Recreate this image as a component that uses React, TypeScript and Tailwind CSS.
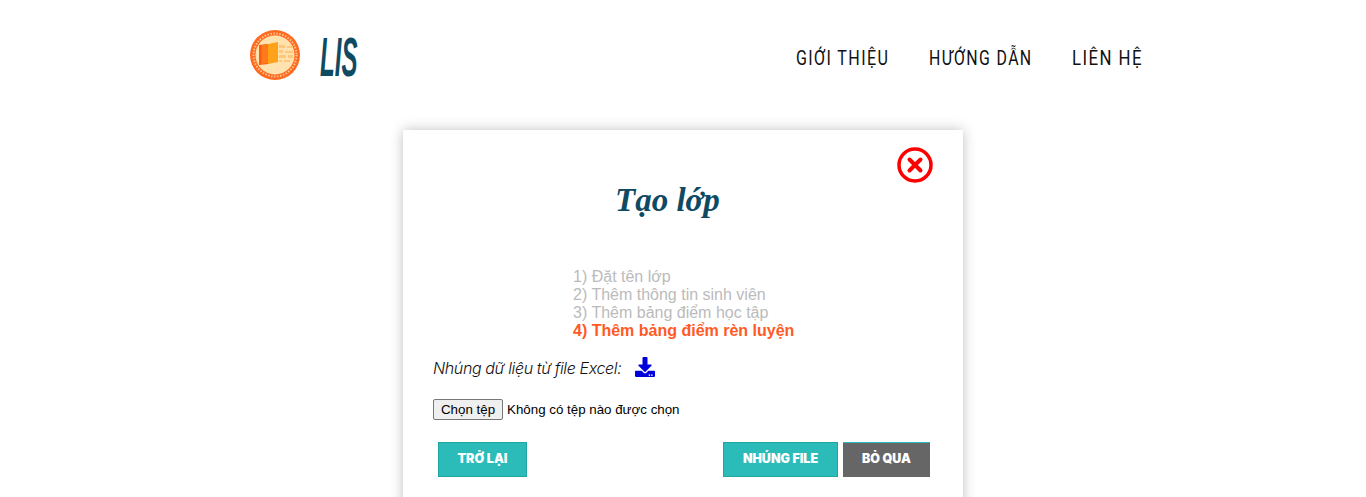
import { FaDownload } from "react-icons/fa";

const Logo = () => (
  <svg width="50" height="50" viewBox="0 0 50 50">
    <circle cx="25" cy="25" r="25" fill="#ff6a1f" />
    <circle cx="25" cy="25" r="21.5" fill="none" stroke="#ffc48f" strokeWidth="2" strokeDasharray="1.5 1.5" />
    <circle cx="25" cy="25" r="19.5" fill="#ffe2ae" />
    <path d="M9 15 L18 14 V34 L9 35 Z" fill="#ff5a12" />
    <path d="M11.5 15 L18 14 V33 L11.5 34 Z" fill="#ff7a1a" />
    <path d="M18 14 L28 12 V32 L18 34 Z" fill="#ffa21a" />
    <path d="M29 15 h6 v3 h-6 Z M37 16 h6 v2 h-6 Z M29 20 h4 v3 h-4 Z M35 21 h8 v2 h-8 Z M29 25 h7 v3 h-7 Z M38 25 h5 v3 h-5 Z M29 30 h3 v2 h-3 Z M34 30 h6 v2 h-6 Z" fill="#ffc77a" />
  </svg>
);

const TealButton = ({ children, className }: { children: string; className: string }) => (
  <button className={`h-[35px] border border-[#21a5a3] bg-[#2bbbb9] text-center font-['Inter',sans-serif] text-[12.5px] font-black text-white ${className}`}>
    {children}
  </button>
);

const NavLink = ({ children, className }: { children: string; className: string }) => (
  <a className={`block origin-left whitespace-nowrap ${className}`}>{children}</a>
);

export default function App() {
  return (
    <div className="h-[497px] overflow-hidden bg-white font-['Liberation_Sans',sans-serif]">
      <header className="ml-[250px] flex h-[100px] w-[892px] items-start justify-between pt-[30px]">
        <div className="flex items-start gap-[20px]">
          <Logo />
          <span className="mt-[2px] w-[37px] origin-left scale-x-[0.43] whitespace-nowrap text-[56px] leading-[50px] font-bold italic text-[#0f4a63]">
            LIS
          </span>
        </div>
        <nav className="flex items-center gap-[40px] pt-[15px] font-['Roboto',sans-serif] text-[20.5px] leading-[26px] tracking-[1.75px] text-[#111]">
          <NavLink className="w-[93px] scale-x-[0.785]">GIỚI THIỆU</NavLink>
          <NavLink className="w-[103px] scale-x-[0.775]">HƯỚNG DẪN</NavLink>
          <NavLink className="w-[70px] scale-x-[0.82]">LIÊN HỆ</NavLink>
        </nav>
      </header>

      <main className="relative mx-auto mt-[30px] h-[400px] w-[560px] bg-white pt-[48px] shadow-[0_0_12px_rgba(0,0,0,0.25)]">
        <svg className="absolute top-[17px] right-[30px]" width="36" height="36" viewBox="0 0 36 36">
          <circle cx="18" cy="18" r="16" fill="none" stroke="#f00" strokeWidth="3.5" />
          <path d="M12.5 12.5 L23.5 23.5 M23.5 12.5 L12.5 23.5" stroke="#f00" strokeWidth="4" strokeLinecap="round" />
        </svg>

        <h1 className="pl-[212px] font-['Liberation_Serif',serif] text-[33px] leading-[44px] font-bold italic text-[#0f4a63]">
          Tạo lớp
        </h1>

        <ol className="mt-[46px] pl-[170px] text-[16px] leading-[18px] text-[#bbb]">
          <li>1) Đặt tên lớp</li>
          <li>2) Thêm thông tin sinh viên</li>
          <li>3) Thêm bảng điểm học tập</li>
          <li className="font-bold text-[#ff5a26]">4) Thêm bảng điểm rèn luyện</li>
        </ol>

        <div className="mt-[16px] flex items-center pl-[30px]">
          <span className="font-['Inter',sans-serif] text-[16px] leading-[24px] font-light tracking-[-0.37px] text-[#111] italic">
            Nhúng dữ liệu từ file Excel:
          </span>
          <FaDownload className="mt-[-2px] ml-[14px] text-[#0000dd]" size={20} />
        </div>

        <div className="mt-[19px] flex items-center pl-[30px] text-[13.33px] text-black">
          <button className="h-[21px] w-[70px] rounded-[2px] border border-[#767676] bg-[#efefef]">Chọn tệp</button>
          <span className="ml-[4px]">Không có tệp nào được chọn</span>
        </div>

        <div className="mt-[22px] flex pr-[33px] pl-[35px]">
          <TealButton className="w-[89px]">TRỞ LẠI</TealButton>
          <TealButton className="ml-auto w-[115px]">NHÚNG FILE</TealButton>
          <button className="ml-[5px] h-[35px] w-[87px] border-t border-t-[#2bbbb9] bg-[#666] pb-[2px] text-center font-['Inter',sans-serif] text-[12.5px] font-black text-white">
            BỎ QUA
          </button>
        </div>
      </main>
    </div>
  );
}
